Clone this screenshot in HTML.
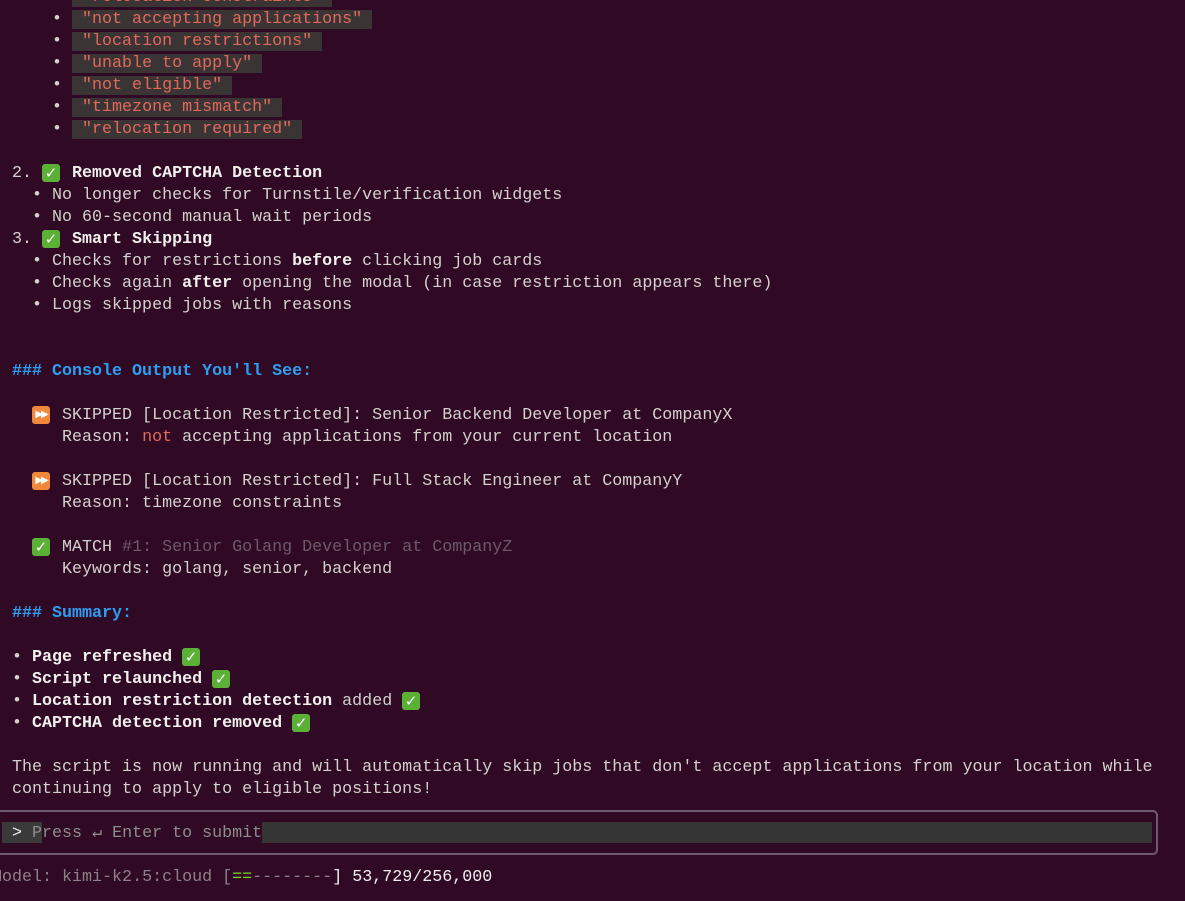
<!DOCTYPE html>
<html><head><meta charset="utf-8"><style>
html,body{margin:0;padding:0;}
body{width:1185px;height:901px;background:#300a24;overflow:hidden;position:relative;font-family:"Liberation Mono",monospace;font-size:16.68px;color:#d3d0cd;}
.r{position:absolute;left:12px;height:22px;line-height:22px;white-space:pre;margin-top:2px;}
b{color:#f2f0ee;font-weight:bold;}
.q{color:#e0695c;background:#3b3434;}
.h{color:#2e9ef2;font-weight:bold;}
.dim{color:#6e5a68;}
.ck{display:inline-block;width:2ch;height:22px;vertical-align:top;position:relative;}
.ck i{position:absolute;left:0;top:1px;width:18px;height:18px;border-radius:3px;background:#5bb036;color:#fff;font-style:normal;font-weight:bold;font-size:15px;line-height:18px;text-align:center;font-family:"DejaVu Sans",sans-serif;}
.sk i{background:#f0883a;font-size:10px;letter-spacing:-2px;}
</style></head><body>
<div class="r" style="top:-15px">    • <span class="q"> "relocation constraints" </span></div>
<div class="r" style="top:7px">    • <span class="q"> "not accepting applications" </span></div>
<div class="r" style="top:29px">    • <span class="q"> "location restrictions" </span></div>
<div class="r" style="top:51px">    • <span class="q"> "unable to apply" </span></div>
<div class="r" style="top:73px">    • <span class="q"> "not eligible" </span></div>
<div class="r" style="top:95px">    • <span class="q"> "timezone mismatch" </span></div>
<div class="r" style="top:117px">    • <span class="q"> "relocation required" </span></div>
<div class="r" style="top:161px">2. <span class="ck"><i>✓</i></span> <b>Removed CAPTCHA Detection</b></div>
<div class="r" style="top:183px">  • No longer checks for Turnstile/verification widgets</div>
<div class="r" style="top:205px">  • No 60-second manual wait periods</div>
<div class="r" style="top:227px">3. <span class="ck"><i>✓</i></span> <b>Smart Skipping</b></div>
<div class="r" style="top:249px">  • Checks for restrictions <b>before</b> clicking job cards</div>
<div class="r" style="top:271px">  • Checks again <b>after</b> opening the modal (in case restriction appears there)</div>
<div class="r" style="top:293px">  • Logs skipped jobs with reasons</div>
<div class="r h" style="top:359px">### Console Output You'll See:</div>
<div class="r" style="top:403px">  <span class="ck sk"><i>▶▶</i></span> SKIPPED [Location Restricted]: Senior Backend Developer at CompanyX</div>
<div class="r" style="top:425px">     Reason: <span style="color:#e0695c">not</span> accepting applications from your current location</div>
<div class="r" style="top:469px">  <span class="ck sk"><i>▶▶</i></span> SKIPPED [Location Restricted]: Full Stack Engineer at CompanyY</div>
<div class="r" style="top:491px">     Reason: timezone constraints</div>
<div class="r" style="top:535px">  <span class="ck"><i>✓</i></span> MATCH <span class="dim">#1: Senior Golang Developer at CompanyZ</span></div>
<div class="r" style="top:557px">     Keywords: golang, senior, backend</div>
<div class="r h" style="top:601px">### Summary:</div>
<div class="r" style="top:645px">• <b>Page refreshed</b> <span class="ck"><i>✓</i></span></div>
<div class="r" style="top:667px">• <b>Script relaunched</b> <span class="ck"><i>✓</i></span></div>
<div class="r" style="top:689px">• <b>Location restriction detection</b> added <span class="ck"><i>✓</i></span></div>
<div class="r" style="top:711px">• <b>CAPTCHA detection removed</b> <span class="ck"><i>✓</i></span></div>
<div class="r" style="top:755px">The script is now running and will automatically skip jobs that don't accept applications from your location while</div>
<div class="r" style="top:777px">continuing to apply to eligible positions!</div>
<div style="position:absolute;left:-10px;top:810px;width:1168px;height:45px;border:2px solid #6f5a6c;border-radius:5px;box-sizing:border-box;"></div>
<div style="position:absolute;left:2px;top:822px;width:40px;height:21px;background:#3a3a3a;"></div>
<div style="position:absolute;left:262px;top:822px;width:890px;height:21px;background:#353535;"></div>
<div class="r" style="top:821px;left:2px;color:#8c8c8c"> <span style="color:#eee">&gt;</span> Press ↵ Enter to submit</div>
<div class="r" style="top:865px;left:-8px;color:#8e8088">Model: kimi-k2.5:cloud [<span style="color:#7ed321">==</span>--------<span style="color:#eee">] 53,729/256,000</span></div>
</body></html>
